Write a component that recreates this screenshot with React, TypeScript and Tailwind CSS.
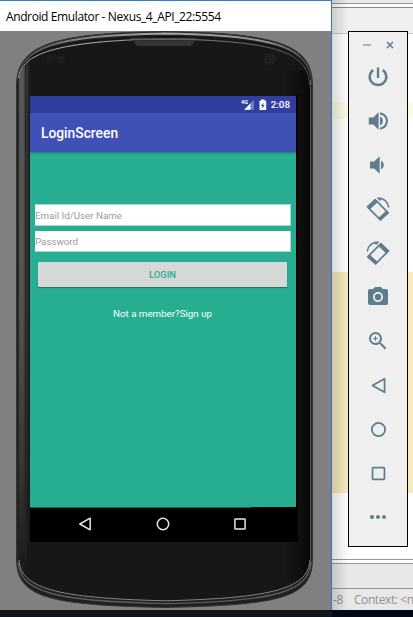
import React from "react";
import { MdPhotoCamera, MdZoomIn, MdMoreHoriz } from "react-icons/md";

function PhoneBody() {
  return (
    <svg className="absolute inset-0" width="331" height="579" viewBox="0 31 331 579" fill="none">
      <defs>
        <linearGradient id="topRim" x1="17" y1="0" x2="312" y2="0" gradientUnits="userSpaceOnUse">
          <stop offset="0" stopColor="#4a4a4a" />
          <stop offset="0.2" stopColor="#808080" />
          <stop offset="0.5" stopColor="#a8a8a8" />
          <stop offset="0.85" stopColor="#909090" />
          <stop offset="1" stopColor="#444444" />
        </linearGradient>
        <linearGradient id="topLine" x1="17" y1="0" x2="312" y2="0" gradientUnits="userSpaceOnUse">
          <stop offset="0" stopColor="#a5a5a5" />
          <stop offset="0.25" stopColor="#b0b0b0" />
          <stop offset="0.5" stopColor="#888888" />
          <stop offset="1" stopColor="#4d4d4d" />
        </linearGradient>
        <linearGradient id="side" x1="0" y1="0" x2="1" y2="0">
          <stop offset="0" stopColor="#252525" />
          <stop offset="0.2" stopColor="#555555" />
          <stop offset="0.42" stopColor="#5c5c5c" />
          <stop offset="0.65" stopColor="#3d3d3d" />
          <stop offset="0.8" stopColor="#303030" />
          <stop offset="1" stopColor="#171717" />
        </linearGradient>
        <linearGradient id="sideFade" x1="0" y1="0" x2="0" y2="1">
          <stop offset="0" stopColor="#171717" stopOpacity="0" />
          <stop offset="0.5" stopColor="#171717" stopOpacity="0.1" />
          <stop offset="0.8" stopColor="#171717" stopOpacity="0.55" />
          <stop offset="1" stopColor="#171717" />
        </linearGradient>
        <linearGradient id="rightFade" x1="0" y1="0" x2="1" y2="0">
          <stop offset="0" stopColor="#171717" />
          <stop offset="1" stopColor="#080808" />
        </linearGradient>
        <clipPath id="glass">
          <path d="M18.5 80 C20 55 55 41 165 38.5 C280 41 309 53 310 85 V560 C309 588 278 598 165 600.5 C52 598 20 588 18.5 560 Z" />
        </clipPath>
      </defs>
      <path
        d="M16.5 85 C17 46 50 33 165 31.5 C282 33 312 46 312.5 85 V560 C312 598 280 605 165 607.5 C50 605 17 598 16.5 560 Z"
        fill="#202020"
        stroke="#343434"
      />
      <path d="M18 82 C20 48 52 35 165 33.5 C280 35 310 48 311.3 85" stroke="url(#topRim)" strokeWidth="1.8" />
      <path d="M18 82 C20 51 53 38.5 165 36.8 C280 38.5 309 50 310.5 85" stroke="#161616" strokeWidth="1.8" />
      <path d="M18 562 C20 592 54 601.5 165 603.6 C276 601.5 309 592 311 562" stroke="#5c5c5c" strokeWidth="1.4" />
      <g clipPath="url(#glass)">
        <rect x="16" y="31" width="298" height="578" fill="#171717" />
        <rect x="285" y="70" width="26" height="510" fill="url(#rightFade)" />
        <rect x="17" y="50" width="13" height="530" fill="url(#side)" />
        <rect x="17" y="50" width="13" height="530" fill="url(#sideFade)" />
        <path d="M25.5 64 V560" stroke="#252525" />
        <rect x="296" y="95" width="2" height="447" fill="#030303" />
      </g>
      <path d="M18.5 78 C21 54 55 41 165 38.8 C280 41 308 53 309.5 85" stroke="url(#topLine)" strokeWidth="1" />
      <path d="M19 560 C21 588 54 598 165 600.8 C276 598 308 588 310 560" stroke="#858585" strokeWidth="1" />
      <path d="M131 38.5 H197 L193 44 Q192 46 190 46 H138 Q136 46 135 44 Z" fill="#303030" />
      <path d="M131 39.3 H196" stroke="#606164" strokeWidth="1.6" />
      <path d="M136 42.5 H192 M137 44.5 H190" stroke="#424242" strokeWidth="1" strokeDasharray="1 1" />
      <circle cx="50" cy="59.5" r="4" fill="#1d1d1d" />
      <circle cx="61" cy="59.5" r="4" fill="#1d1d1d" />
      <circle cx="270" cy="59" r="6" fill="#202020" />
      <circle cx="270" cy="59" r="2.6" fill="#1a1a22" />
      <circle cx="270" cy="59" r="1.1" fill="#282344" />
      <path d="M310.5 80 V562" stroke="#555555" />
      <path d="M312.5 129 V168" stroke="#303030" />
    </svg>
  );
}

function StatusIcons() {
  return (
    <svg width="26" height="12" viewBox="241 98 26 12" fill="white">
      <path d="M253.8 98.8 V108.7 H244.2 Z" opacity="0.35" />
      <path d="M250.4 102.5 V108.7 H244.2 Z" />
      <text x="241" y="103.4" className="font-[Roboto,sans-serif] text-[5.5px] font-bold">4G</text>
      <path d="M261 98.6 H264.6 V99.8 H266.2 V109 H259.5 V99.8 H261 Z" />
      <path d="M263.6 101.3 L261 104.9 H262.6 L262 107.8 L264.7 104.1 H263 Z" fill="#303f9f" />
    </svg>
  );
}

function NavIcon({ kind, size = 18 }: { kind: "back" | "home" | "recent"; size?: number }) {
  return (
    <svg width={size} height={size} viewBox="0 0 18 18" fill="none" stroke="currentColor" strokeWidth="1.5">
      {kind === "back" && <path d="M14.2 3.2 V14.8 L3.8 9 Z" strokeLinejoin="round" />}
      {kind === "home" && <circle cx="9" cy="9" r="5.7" />}
      {kind === "recent" && <rect x="3.9" y="3.9" width="10.2" height="10.2" rx="0.5" />}
    </svg>
  );
}

function Power() {
  return (
    <svg width="24" height="24" viewBox="0 0 24 24" fill="none" stroke="currentColor" strokeWidth="2.4">
      <path d="M12 2.5 V13" />
      <path d="M7.2 5 A8.3 8.3 0 1 0 16.8 5" />
    </svg>
  );
}

function Volume({ loud = false }: { loud?: boolean }) {
  return (
    <svg width="24" height="24" viewBox="0 0 24 24" fill="none" stroke="currentColor" className={loud ? "" : "-translate-x-px"}>
      {loud ? (
        <>
          <path d="M2.8 8.6 H7.3 L12.6 3.3 V20.7 L7.3 15.4 H2.8 Z" fill="currentColor" stroke="none" />
          <path d="M14 7.5 C17.8 9 17.8 15 14 16.5 Z" fill="currentColor" stroke="none" />
          <path d="M14 4.2 C23.2 6.6 23.2 17.4 14 19.8" strokeWidth="2.1" />
        </>
      ) : (
        <>
          <path d="M5 8.6 H9.2 L14.7 3.3 V20.7 L9.2 15.4 H5 Z" fill="currentColor" stroke="none" />
          <path d="M16 7.8 C19.8 9.2 19.8 14.8 16 16.2 Z" fill="currentColor" stroke="none" />
        </>
      )}
    </svg>
  );
}

function Rotate({ flip = false }: { flip?: boolean }) {
  return (
    <svg width="24" height="24" viewBox="0 0 24 24" className={flip ? "-scale-x-100" : ""} fill="none" stroke="currentColor">
      <path d="M9.2 2.7 L22.2 15.8 L14.4 22.8 L1.5 9.8 Z" strokeWidth="1.7" strokeLinejoin="round" />
      <path d="M1.7 9.6 L9.2 2.8 L11.4 5 L3.9 11.9 Z M20.4 14.1 L22.2 15.9 L14.5 22.8 L12.7 21 Z" fill="currentColor" strokeWidth="0.9" />
      <path d="M11.5 1.3 Q21 1 22.8 10.5" strokeWidth="1.4" />
      <path d="M11 0.8 H16 L14 4.2 Z" fill="currentColor" stroke="none" />
    </svg>
  );
}

function Emulator() {
  return (
    <div className="flex h-[610px] w-[332px] flex-col border-r border-t border-[#2f7dc4] bg-white">
      <div className="flex h-[30px] shrink-0 items-center pl-[6px] pt-px font-['Open_Sans','Noto_Sans',sans-serif] text-[12px] tracking-[-0.39px] whitespace-nowrap text-black">
        Android Emulator - Nexus_4_API_22:5554
      </div>
      <div className="relative h-[579px] bg-[#808080] pl-[30px] pt-[65px]">
        <PhoneBody />
        <div className="relative flex h-[446px] w-[267px] flex-col bg-black font-[Roboto,sans-serif]">
          <div className="flex h-[411px] w-[266px] flex-col bg-[#27ae90]">
            <div className="flex h-[17px] shrink-0 items-center justify-end bg-[#303f9f] pr-[6px] text-white">
              <StatusIcons />
              <span className="ml-[4px] text-[9.8px] leading-none font-medium">2:08</span>
            </div>
            <div className="flex h-[39px] shrink-0 items-center bg-[#3f51b5] pt-[2px] pl-[11px] text-[13.8px] font-medium text-white shadow-[0_1px_2px_rgba(0,0,0,0.3)]">
              LoginScreen
            </div>
            <div className="flex flex-1 flex-col pt-[52px] pr-[5px] pl-[5px]">
              <div className="flex h-[22px] shrink-0 items-center border border-l-0 border-[#a5dccf] bg-white pt-[2px] text-[9.75px] text-[#9b9b9b]">
                Email Id/User Name
              </div>
              <div className="mt-[5px] flex h-[21px] shrink-0 items-center border-r border-b border-[#a5dccf] bg-white pt-[3px] text-[9.75px] text-[#9b9b9b]">
                Password
              </div>
              <div className="mt-[10px] mr-[4px] ml-[3px] flex h-[25px] shrink-0 items-center justify-center rounded-[1px] bg-[#d6d7d7] pt-px text-[9.4px] font-medium text-[#27ae90] shadow-[0_1px_1px_rgba(0,0,0,0.35)]">
                LOGIN
              </div>
              <div className="mt-[20px] pr-px text-center text-[9.75px] leading-[14px] text-white">Not a member?Sign up</div>
            </div>
          </div>
          <div className="flex h-[35px] shrink-0 items-center justify-center gap-[59.5px] bg-black pr-[2px] pb-px text-[#e6e6e6]">
            <NavIcon kind="back" />
            <NavIcon kind="home" />
            <NavIcon kind="recent" />
          </div>
          <div className="absolute top-[411px] left-0 h-px w-[221px] bg-[#126552]" />
        </div>
      </div>
    </div>
  );
}

function EditorBackdrop() {
  return (
    <div className="absolute inset-0 flex flex-col bg-white font-['Open_Sans','Noto_Sans',sans-serif]">
      <div className="h-[4px] shrink-0 border-b border-[#949494] bg-[#eaeaea]" />
      <div className="mt-[3px] h-[27px] shrink-0 border-t border-b border-t-[#888888] border-b-[#c8c8c8] bg-[#f0f0f0]" />
      <div className="mt-[68px] h-[17px] shrink-0 bg-[#fffae3]" />
      <div className="mt-[153px] h-[221px] shrink-0 bg-[#f6ebbc]" />
      <div className="mt-[66px] h-px shrink-0 bg-[#999999]" />
      <div className="mt-[3px] h-[26px] shrink-0 border-t border-b border-[#999999] bg-[#e8e8e8]" />
      <div className="flex h-[21px] shrink-0 items-center gap-[11px] bg-[#e8e8e8] pl-px text-[12px] tracking-[-0.4px] whitespace-pre text-[#929292]">
        <span>-8</span>
        <span>Context: &lt;n</span>
      </div>
      <div className="absolute inset-y-0 left-0 w-[17px] bg-linear-to-r from-black/15 to-transparent" />
    </div>
  );
}

function Toolbar() {
  return (
    <div className="relative mt-[31px] ml-[16px] flex h-[516px] w-[60px] flex-col items-center border border-black bg-[#efefef] text-[#607d8b]">
      <div className="flex h-[23px] w-full shrink-0 items-center justify-center gap-[18px] pt-[3px] pl-[4px]">
        <span className="h-[2px] w-[8px] bg-[#a4b4bc]" />
        <svg width="8" height="8" viewBox="0 0 8 8" stroke="currentColor" strokeWidth="1.5" className="-translate-x-[3px]">
          <path d="M1 1 L7 7 M7 1 L1 7" />
        </svg>
      </div>
      {[
        <Power />,
        <Volume loud />,
        <Volume />,
        <Rotate />,
        <Rotate flip />,
        <MdPhotoCamera size={24} />,
        <MdZoomIn size={24} />,
        <NavIcon kind="back" size={21} />,
        <NavIcon kind="home" size={21} />,
        <NavIcon kind="recent" size={21} />,
        <MdMoreHoriz size={24} />,
      ].map((icon, i) => (
        <div key={i} className="flex h-[44px] w-full shrink-0 items-center justify-center">
          {icon}
        </div>
      ))}
    </div>
  );
}

export default function App() {
  return (
    <div className="h-[617px] w-[413px] overflow-hidden bg-[#050914]">
      <div className="flex h-[610px]">
        <Emulator />
        <div className="relative h-[610px] w-[81px] overflow-hidden">
          <EditorBackdrop />
          <Toolbar />
        </div>
      </div>
      <div className="flex h-[7px]">
        <div className="w-[332px] border-b border-[#07152c] bg-[#171717]" />
        <div className="flex-1 bg-[#030818]" />
      </div>
    </div>
  );
}
